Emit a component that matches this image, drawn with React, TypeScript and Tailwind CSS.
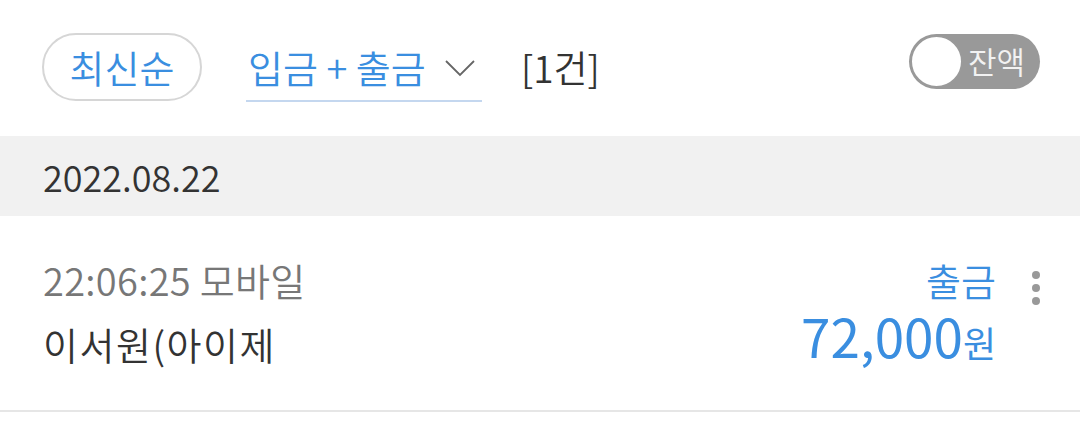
import React from "react";

export default function App() {
  const font = { fontFamily: '"Noto Sans CJK KR", "Noto Sans", sans-serif' };
  return (
    <div className="w-[1080px] h-[438px] bg-white overflow-hidden font-[350]" style={font}>
      <div className="h-[136px] flex items-start pl-[42px] pr-[40px] pt-[33px]">
        <div className="h-[68px] w-[160px] rounded-full border-2 border-[#d6d6d6] flex items-center justify-center text-[38px] text-[#3a8ee0] leading-none">
          최신순
        </div>
        <div className="ml-[44px] w-[236px] h-[69px] border-b-2 border-[#c4d7ef] flex items-center pl-[2px]">
          <span className="text-[38px] text-[#3a8ee0] leading-none whitespace-nowrap">입금 + 출금</span>
          <svg className="ml-[18px] mt-[2px]" width="32" height="18" viewBox="0 0 32 18">
            <polyline points="2,2 16,16 30,2" fill="none" stroke="#666" strokeWidth="1.8" />
          </svg>
        </div>
        <div className="ml-[39px] h-[68px] flex items-center text-[37px] text-[#333] leading-none">[1건]</div>
        <div className="ml-auto mt-[1px] w-[131px] h-[55px] rounded-full bg-[#999999] flex items-center">
          <div className="w-[53px] h-[53px] ml-[1px] rounded-full bg-white border-2 border-[#9a9a9a]" />
          <span className="ml-[5px] text-[31px] text-[#f2f2f2] leading-none -mt-[2px]">잔액</span>
        </div>
      </div>
      <div className="h-[80px] bg-[#f1f1f1] flex items-center pl-[43px] text-[36px] text-[#333] leading-none">
        2022.08.22
      </div>
      <div className="h-[196px] border-b-2 border-[#e6e6e6] flex pl-[43px] pr-[40px] pt-[45px]">
        <div className="flex flex-col">
          <span className="text-[38px] text-[#777] leading-none tracking-[0.3px]">22:06:25 모바일</span>
          <span className="mt-[26px] text-[38px] text-[#333] leading-none tracking-[1.5px]">이서원(아이제</span>
        </div>
        <div className="ml-auto flex">
          <div className="flex flex-col items-end">
            <span className="text-[38px] text-[#3a8ee0] leading-none">출금</span>
            <span className="mt-[10px] text-[#3a8ee0] leading-none font-normal">
              <span className="text-[53px]">72,000</span>
              <span className="text-[36px]">원</span>
            </span>
          </div>
          <div className="ml-[36px] mt-[10px] flex flex-col gap-[5px]">
            <div className="w-[8px] h-[8px] rounded-full bg-[#999]" />
            <div className="w-[8px] h-[8px] rounded-full bg-[#999]" />
            <div className="w-[8px] h-[8px] rounded-full bg-[#999]" />
          </div>
        </div>
      </div>
    </div>
  );
}
